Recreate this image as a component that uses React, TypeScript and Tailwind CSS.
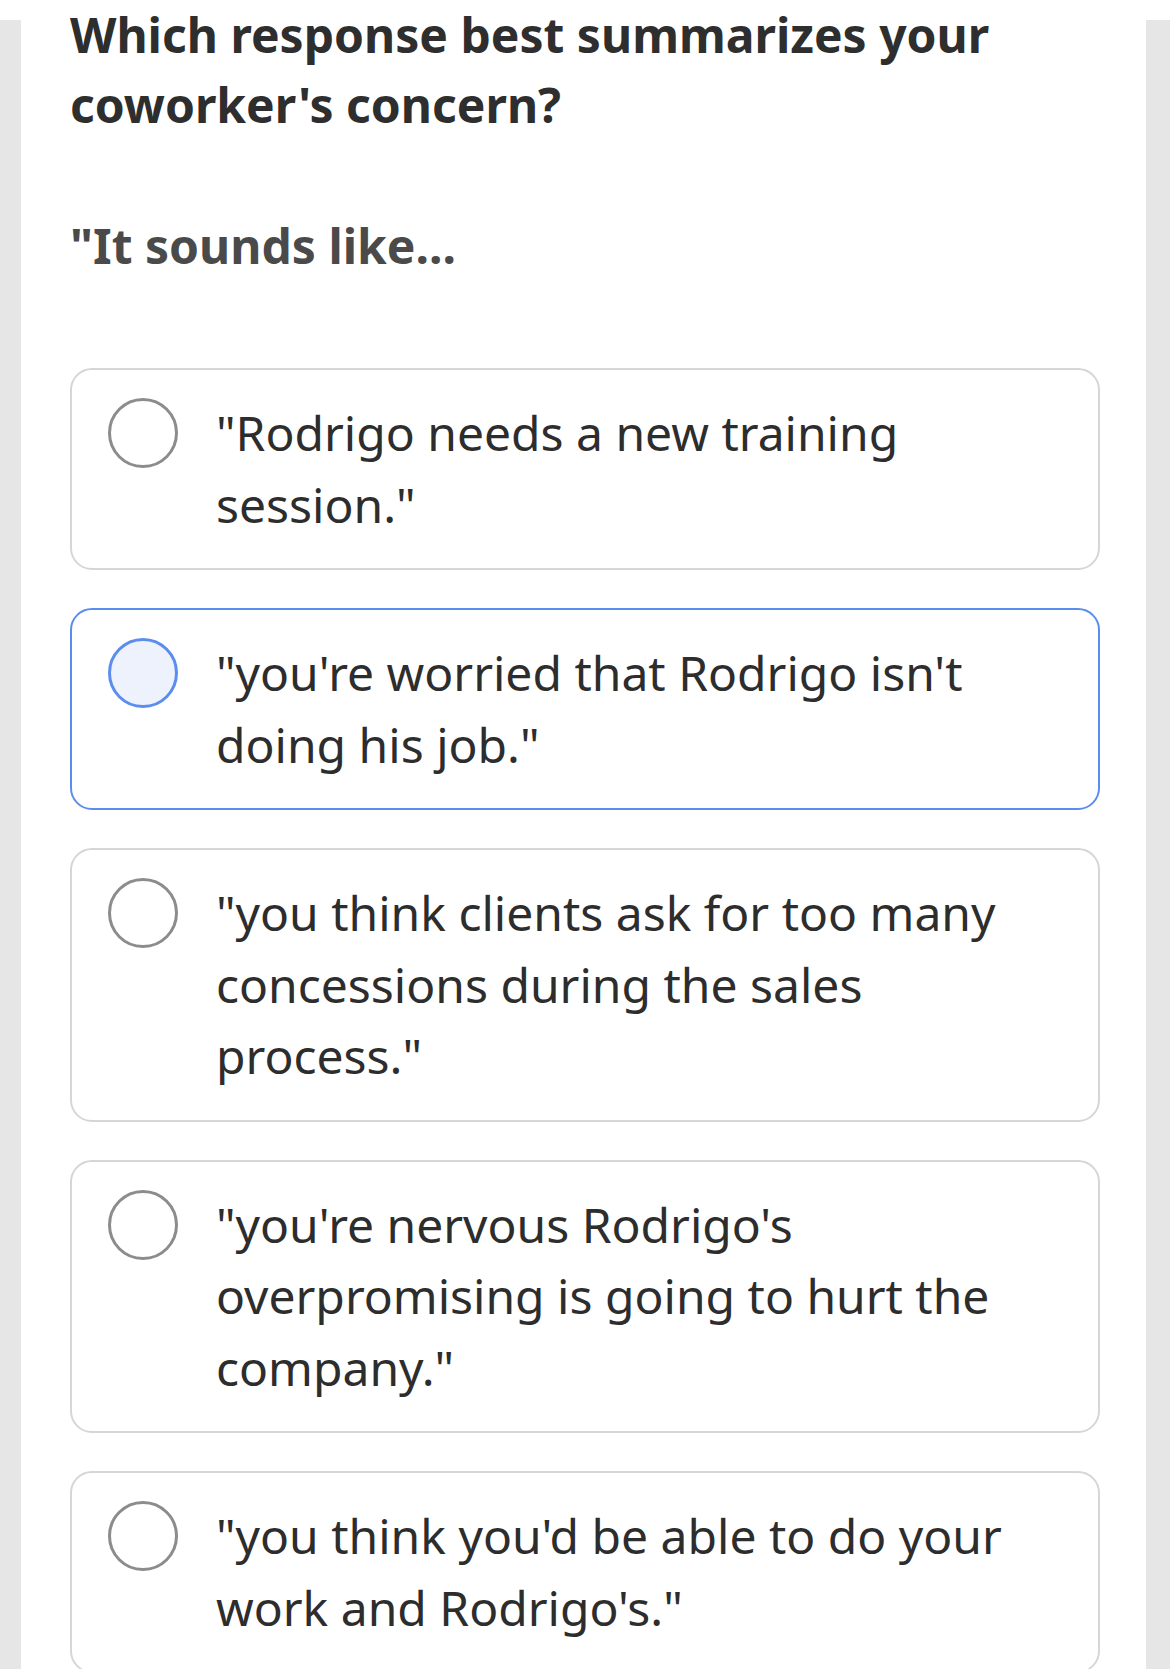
import React from 'react';

type Option = { id: number; text: string };

const options: Option[] = [
  { id: 1, text: '"Rodrigo needs a new training session."' },
  { id: 2, text: '"you\'re worried that Rodrigo isn\'t doing his job."' },
  { id: 3, text: '"you think clients ask for too many concessions during the sales process."' },
  { id: 4, text: '"you\'re nervous Rodrigo\'s overpromising is going to hurt the company."' },
  { id: 5, text: '"you think you\'d be able to do your work and Rodrigo\'s."' },
];

const selectedId = 2;

const OptionCard: React.FC<{ option: Option; selected: boolean }> = ({ option, selected }) => (
  <div
    className={`flex items-start gap-[38px] rounded-[22px] border-2 bg-white pl-[36px] pr-[36px] py-[28px] ${
      selected ? 'border-[#5b8def]' : 'border-[#d6d6d6]'
    }`}
  >
    <div
      className={`h-[70px] w-[70px] shrink-0 rounded-full border-[3px] ${
        selected ? 'border-[#5b8def] bg-[#edf2fd]' : 'border-[#8c8c8c] bg-white'
      }`}
    />
    <p className="-mt-[1px] text-[48px] leading-[71.5px] text-[#2d2d2d]">{option.text}</p>
  </div>
);

export default function App() {
  return (
    <div className="flex min-h-screen bg-white" style={{ fontFamily: '"Noto Sans", "Open Sans", sans-serif' }}>
      {/* left rail */}
      <div className="mt-[20px] w-[21px] shrink-0 bg-[#e6e6e6]" />

      <main className="flex-1 bg-white px-[49px]">
        <h1 className="text-[48px] font-bold leading-[70px] text-[#2e2e2e]">
          Which response best summarizes your coworker's concern?
        </h1>
        <h2 className="mt-[71px] text-[48px] font-bold leading-[70px] text-[#4a4a4a]">"It sounds like...</h2>

        <div className="mt-[87px] mr-[-3px] flex flex-col gap-[38px]">
          {options.map((o) => (
            <OptionCard key={o.id} option={o} selected={o.id === selectedId} />
          ))}
        </div>
      </main>

      {/* right rail */}
      <div className="mt-[20px] w-[24px] shrink-0 bg-[#e6e6e6]" />
    </div>
  );
}
